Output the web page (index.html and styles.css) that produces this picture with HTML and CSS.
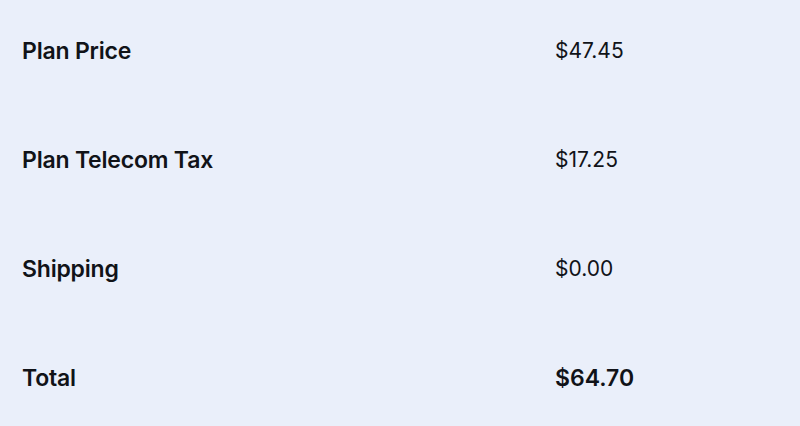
FILE: index.html
```html
<!DOCTYPE html>
<html>
<head>
<meta charset="utf-8">
<link rel="stylesheet" href="styles.css">
</head>
<body>
<div class="summary">
  <div class="row"><span class="label">Plan Price</span><span class="value">$47.45</span></div>
  <div class="row"><span class="label">Plan Telecom Tax</span><span class="value">$17.25</span></div>
  <div class="row"><span class="label">Shipping</span><span class="value">$0.00</span></div>
  <div class="row total"><span class="label">Total</span><span class="value">$64.70</span></div>
</div>
</body>
</html>
```
FILE: styles.css
```css
html, body {
  margin: 0;
  padding: 0;
  background: #eaeffa;
  height: 100%;
}
body {
  font-family: "Inter", "Noto Sans", sans-serif;
  color: #111318;
}
.summary {
  display: flex;
  flex-direction: column;
}
.row {
  display: grid;
  grid-template-columns: 533px 1fr;
  height: 109px;
  box-sizing: border-box;
  padding: 37px 0 0 22px;
  line-height: 28px;
}
.label {
  font-size: 23px;
  font-weight: 600;
  letter-spacing: -0.2px;
}
.value {
  font-size: 21px;
  font-weight: 400;
}
.total .value {
  font-size: 23px;
  font-weight: 600;
}
```
